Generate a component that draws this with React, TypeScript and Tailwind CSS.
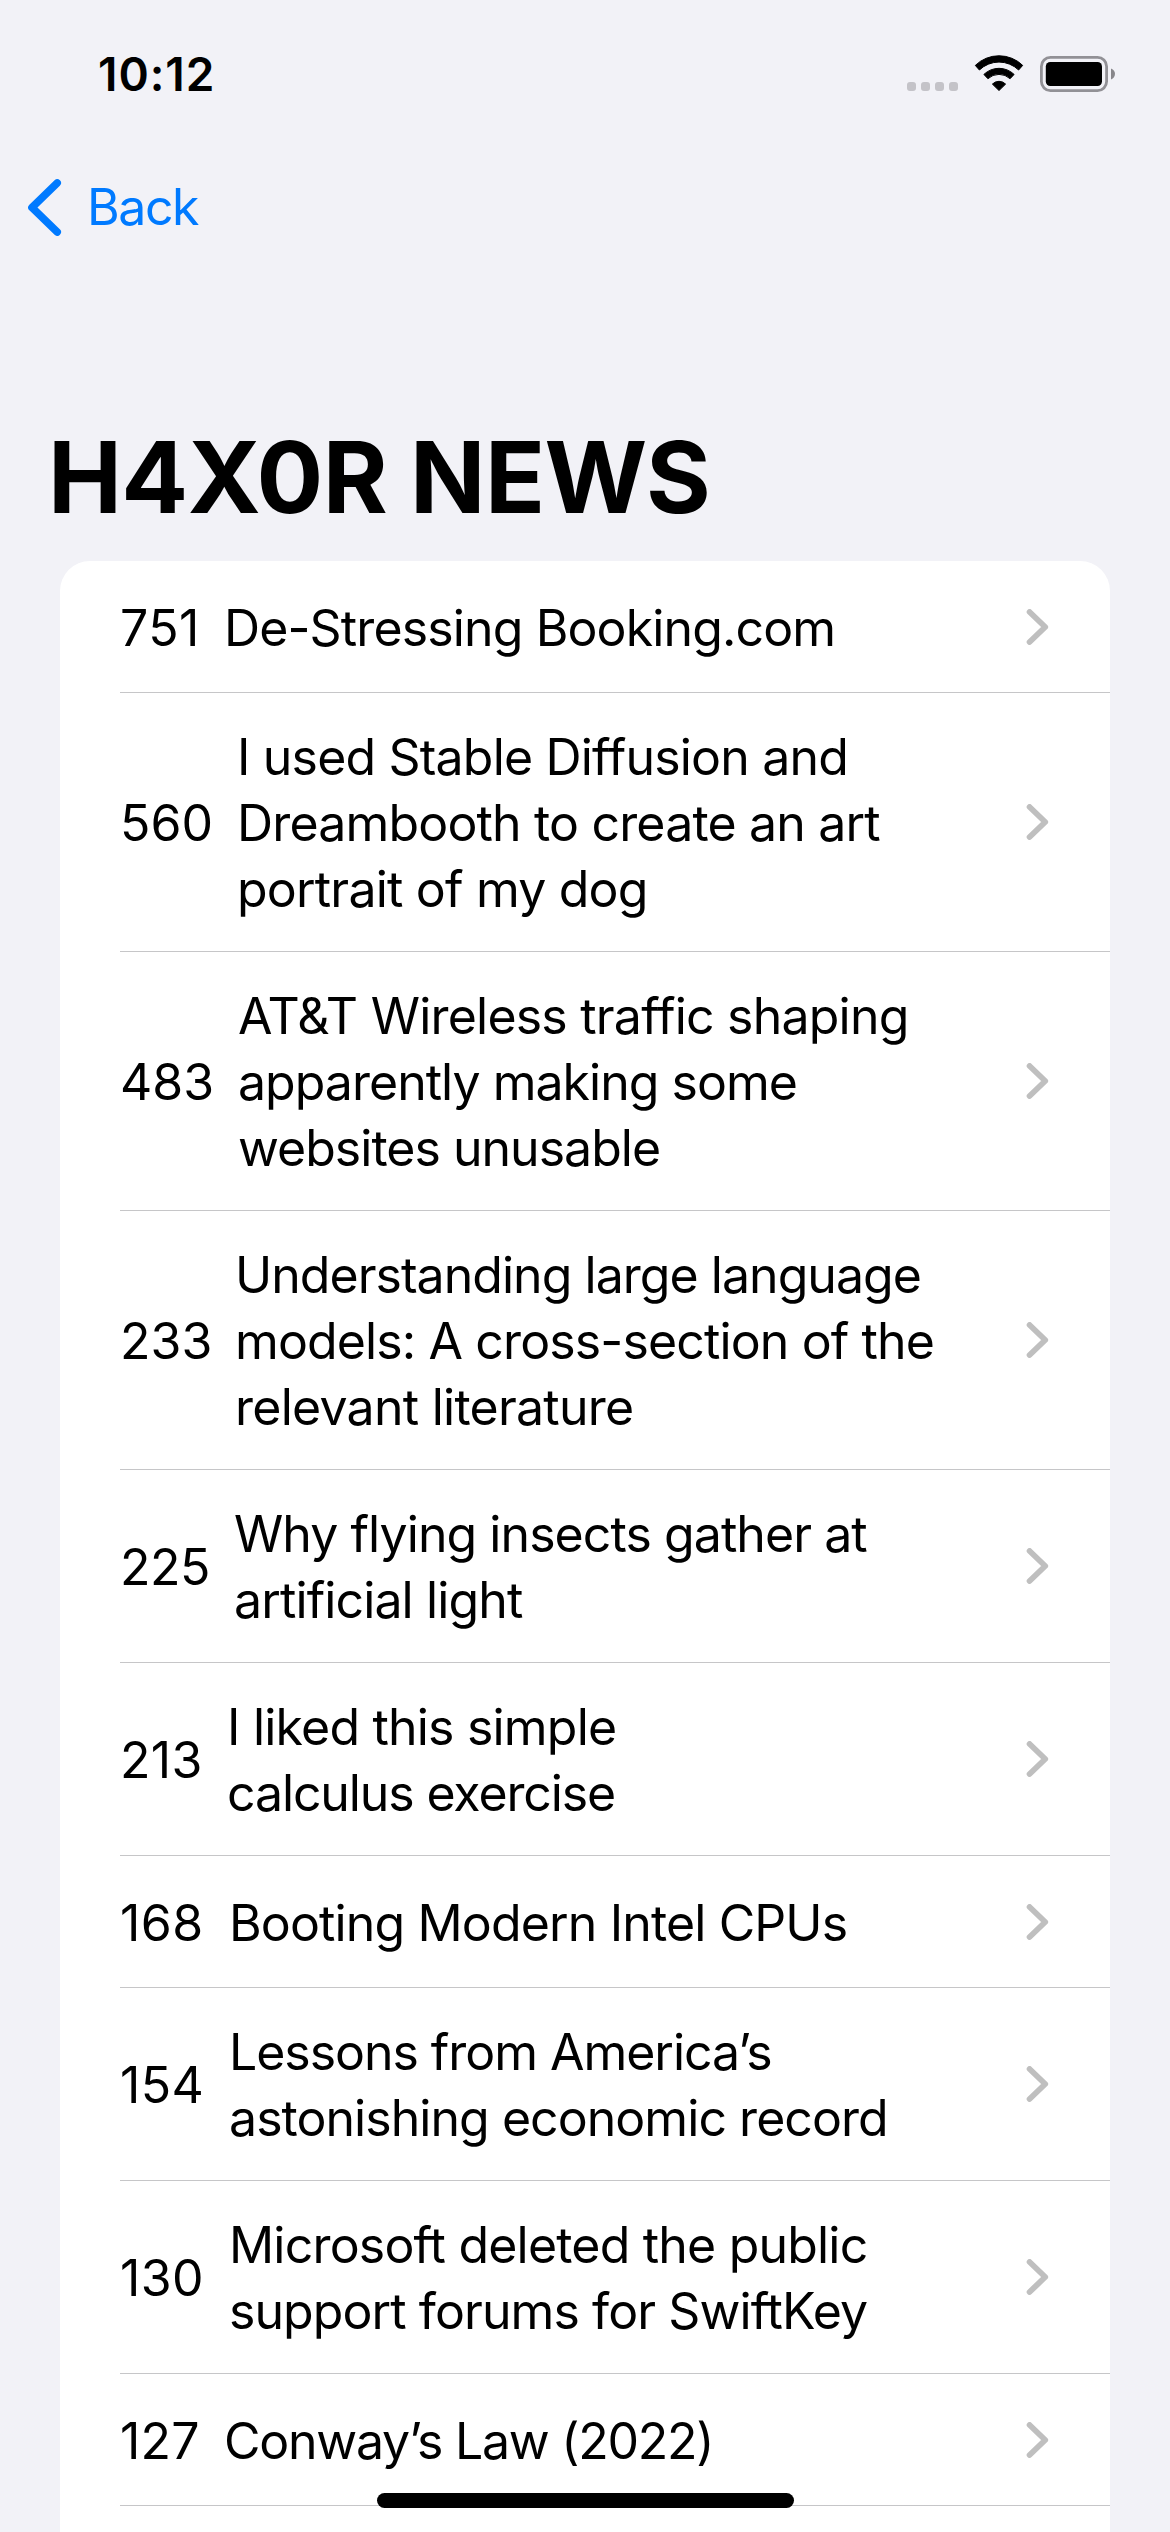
type Line = [text: string, tracking: string];
type Story = { points: string; pointsTracking: string; column: string; height: string; lines: Line[] };

const stories: Story[] = [
  {
    points: "751",
    pointsTracking: "tracking-[0.4px]",
    column: "w-[104px]",
    height: "h-[132px]",
    lines: [["De-Stressing Booking.com", "tracking-[-0.87px]"]],
  },
  {
    points: "560",
    pointsTracking: "tracking-normal",
    column: "w-[117px]",
    height: "h-[259px]",
    lines: [
      ["I used Stable Diffusion and", "tracking-[-0.82px]"],
      ["Dreambooth to create an art", "tracking-[-0.83px]"],
      ["portrait of my dog", "tracking-[-0.8px]"],
    ],
  },
  {
    points: "483",
    pointsTracking: "tracking-normal",
    column: "w-[118px]",
    height: "h-[259px]",
    lines: [
      ["AT&T Wireless traffic shaping", "tracking-[-0.78px]"],
      ["apparently making some", "tracking-[-0.98px]"],
      ["websites unusable", "tracking-[-0.98px]"],
    ],
  },
  {
    points: "233",
    pointsTracking: "tracking-normal",
    column: "w-[115px]",
    height: "h-[259px]",
    lines: [
      ["Understanding large language", "tracking-[-0.96px]"],
      ["models: A cross-section of the", "tracking-[-0.87px]"],
      ["relevant literature", "tracking-[-0.74px]"],
    ],
  },
  {
    points: "225",
    pointsTracking: "tracking-[-0.5px]",
    column: "w-[114px]",
    height: "h-[193px]",
    lines: [
      ["Why flying insects gather at", "tracking-[-0.93px]"],
      ["artificial light", "tracking-[-0.88px]"],
    ],
  },
  {
    points: "213",
    pointsTracking: "tracking-[0.3px]",
    column: "w-[107px]",
    height: "h-[193px]",
    lines: [
      ["I liked this simple", "tracking-[-0.8px]"],
      ["calculus exercise", "tracking-[-1.12px]"],
    ],
  },
  {
    points: "168",
    pointsTracking: "tracking-[0.4px]",
    column: "w-[109px]",
    height: "h-[132px]",
    lines: [["Booting Modern Intel CPUs", "tracking-[-0.86px]"]],
  },
  {
    points: "154",
    pointsTracking: "tracking-[0.4px]",
    column: "w-[109px]",
    height: "h-[193px]",
    lines: [
      ["Lessons from America’s", "tracking-[-1.04px]"],
      ["astonishing economic record", "tracking-[-0.95px]"],
    ],
  },
  {
    points: "130",
    pointsTracking: "tracking-[0.4px]",
    column: "w-[109px]",
    height: "h-[193px]",
    lines: [
      ["Microsoft deleted the public", "tracking-[-0.8px]"],
      ["support forums for SwiftKey", "tracking-[-0.92px]"],
    ],
  },
  {
    points: "127",
    pointsTracking: "tracking-[0.2px]",
    column: "w-[104px]",
    height: "h-[132px]",
    lines: [["Conway’s Law (2022)", "tracking-[-1.24px]"]],
  },
];

function StatusBar() {
  return (
    <div className="flex h-[147px] justify-between pr-[55px] pl-[98px]">
      <span className="mt-[46px] text-[46px] leading-[56px] font-semibold tracking-[0.97px]">10:12</span>
      <div className="flex items-start">
        <div className="mt-[82px] flex gap-[5px]">
          {[0, 1, 2, 3].map((i) => (
            <span key={i} className="size-[9px] rounded-[3px] bg-[#c4c3c8]" />
          ))}
        </div>
        <svg className="mt-[54px] ml-4 h-[38px] w-[50px]" viewBox="0 0 50 38" stroke="#000" strokeWidth="1" strokeLinejoin="round">
          <path d="M1.3 11.4A34 34 0 0 1 48.7 11.4L44.6 16A28.2 28.2 0 0 0 5.4 16Z" />
          <path d="M9.9 20.4A21.8 21.8 0 0 1 40.1 20.4L36.1 24.7A16.4 16.4 0 0 0 13.9 24.7Z" />
          <path d="M18.4 30.1A9.2 9.2 0 0 1 31.6 30.1L25 36.5Z" />
        </svg>
        <svg className="mt-[56px] ml-4 h-9 w-[75px]" viewBox="0 0 75 36">
          <rect x="1.4" y="1.4" width="65.2" height="33.2" rx="9" fill="none" stroke="#929196" strokeWidth="2.8" />
          <rect x="5.8" y="6" width="56.2" height="24" rx="4.5" />
          <path d="M71 12.4C73.6 13.3 75 15.4 75 17.8S73.6 22.6 71 23.5Z" fill="#88878b" />
        </svg>
      </div>
    </div>
  );
}

function BackButton() {
  return (
    <button className="flex h-[120px] w-[220px] items-center pl-[28px] text-[#007aff]">
      <svg className="h-[58px] w-[34px]" viewBox="0 0 34 58" fill="none" stroke="currentColor" strokeWidth="7.6" strokeLinecap="round" strokeLinejoin="round">
        <path d="M29.2 5L4 29.5L29.2 54" />
      </svg>
      <span className="ml-[25px] text-[50px] leading-[66px] tracking-[-1.45px]">Back</span>
    </button>
  );
}

function Chevron({ nudge }: { nudge: boolean }) {
  return (
    <span className={nudge ? "mr-[61px] pt-px" : "mr-[61px]"}>
      <svg className="block h-9 w-[23px]" viewBox="0 0 23 36" fill="none" stroke="#bfbfbf" strokeWidth="5.8" strokeLinecap="round" strokeLinejoin="round">
        <path d="M3.6 3L19.2 18L3.6 33" />
      </svg>
    </span>
  );
}

function StoryRow({ story }: { story: Story }) {
  return (
    <li className={`flex items-center border-b border-[#c6c6c8] text-[50px] leading-[66px] ${story.height}`}>
      <span className={`shrink-0 pt-[2px] ${story.column} ${story.pointsTracking}`}>{story.points}</span>
      <p className="grow pt-[2px]">
        {story.lines.map(([text, tracking]) => (
          <span key={text} className={`block whitespace-nowrap ${tracking}`}>
            {text}
          </span>
        ))}
      </p>
      <Chevron nudge={story.lines.length === 1} />
    </li>
  );
}

export default function App() {
  return (
    <div className="relative flex h-[2532px] w-[1170px] flex-col overflow-hidden bg-[#f2f2f7] font-['Inter',sans-serif] text-black">
      <StatusBar />
      <BackButton />
      <h1 className="mt-[150px] mb-6 pl-12 text-[99px] leading-[120px] font-bold tracking-[-0.59px] whitespace-nowrap">H4X0R NEWS</h1>
      <ul className="mx-[60px] grow rounded-t-[30px] bg-white pl-[60px]">
        {stories.map((story) => (
          <StoryRow key={story.points} story={story} />
        ))}
      </ul>
      <div className="absolute bottom-6 left-[377px] h-[15px] w-[417px] rounded-full bg-black" />
    </div>
  );
}
